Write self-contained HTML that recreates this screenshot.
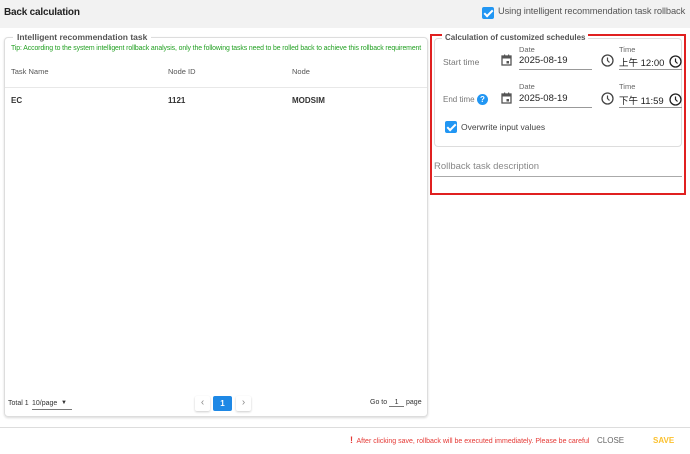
<!DOCTYPE html>
<html><head><meta charset="utf-8"><style>
*{box-sizing:border-box;margin:0;padding:0}
body{width:690px;height:454px;background:#fff;font-family:"Liberation Sans","Noto Sans CJK SC",sans-serif;position:relative;overflow:hidden;color:#333}
.a{position:absolute;white-space:nowrap}
.hdr{position:absolute;left:0;top:0;width:690px;height:28px;background:#f2f2f2}
.cb{position:absolute;width:12px;height:12px;background:#2196f3;border-radius:2px}
.cb:after{content:"";position:absolute;left:3.5px;top:1px;width:3px;height:7px;border:solid #fff;border-width:0 2px 2px 0;transform:rotate(45deg)}
.lbl{font-size:7.5px;color:#666}
.ul{position:absolute;border-bottom:1px solid #999}
svg{position:absolute}
</style></head><body>
<div class="hdr"></div>
<div class="a" style="left:4px;top:7px;font-size:10px;font-weight:bold;color:#222;letter-spacing:-0.2px">Back calculation</div>
<div class="cb" style="left:482px;top:7px"></div>
<div class="a" style="left:498px;top:6px;font-size:9.3px;color:#555;letter-spacing:-0.1px">Using intelligent recommendation task rollback</div>

<div class="a" style="left:4px;top:37px;width:424px;height:380px;border:1px solid #ddd;border-radius:4px;box-shadow:0 1px 2px rgba(0,0,0,.15)"></div>
<div class="a" style="left:13px;top:32px;background:#fff;padding:0 4px;font-size:8.5px;font-weight:bold;color:#555">Intelligent recommendation task</div>
<div class="a" style="left:11px;top:45px;font-size:6.9px;color:#22a022;letter-spacing:-0.1px">Tip: According to the system intelligent rollback analysis, only the following tasks need to be rolled back to achieve this rollback requirement</div>
<div class="a" style="left:11px;top:67px;font-size:7.5px;color:#555">Task Name</div>
<div class="a" style="left:168px;top:67px;font-size:7.5px;color:#555">Node ID</div>
<div class="a" style="left:292px;top:67px;font-size:7.5px;color:#555">Node</div>
<div class="a" style="left:5px;top:87px;width:422px;border-top:1px solid #e8e8e8"></div>
<div class="a" style="left:11px;top:96px;font-size:8px;font-weight:bold;color:#333">EC</div>
<div class="a" style="left:168px;top:96px;font-size:8px;font-weight:bold;color:#333">1121</div>
<div class="a" style="left:292px;top:96px;font-size:8px;font-weight:bold;color:#333">MODSIM</div>

<div class="a" style="left:8px;top:400px;font-size:7px">Total 1</div>
<div class="a" style="left:32px;top:400px;font-size:7px;width:40px;border-bottom:1px solid #777;height:10px">10/page <span style="position:absolute;left:29px;top:0;font-size:6px">▼</span></div>
<div class="a" style="left:195px;top:396px;width:15px;height:15px;border-radius:2px;box-shadow:0 1px 2px rgba(0,0,0,.2);font-size:10px;color:#888;text-align:center;line-height:14px">‹</div>
<div class="a" style="left:213px;top:396px;width:19px;height:15px;border-radius:2px;background:#1e88e5;color:#fff;font-size:8px;font-weight:bold;text-align:center;line-height:15px">1</div>
<div class="a" style="left:236px;top:396px;width:15px;height:15px;border-radius:2px;box-shadow:0 1px 2px rgba(0,0,0,.2);font-size:10px;color:#888;text-align:center;line-height:14px">›</div>
<div class="a" style="left:370px;top:399px;font-size:7px">Go to <span style="display:inline-block;width:15px;border-bottom:1px solid #777;text-align:center">1</span> page</div>

<div class="a" style="left:0;top:427px;width:690px;border-top:1px solid #ddd"></div>
<div class="a" style="left:350px;top:435px;font-size:7px;color:#e53935"><b style="font-size:9px">!</b>&nbsp; After clicking save, rollback will be executed immediately. Please be careful</div>
<div class="a" style="left:597px;top:436px;font-size:8px;color:#666">CLOSE</div>
<div class="a" style="left:653px;top:436px;font-size:8px;color:#fbc02d;font-weight:bold">SAVE</div>

<div class="a" style="left:430px;top:34px;width:256px;height:161px;border:2px solid #e02020"></div>
<div class="a" style="left:434px;top:38px;width:248px;height:109px;border:1px solid #ddd;border-radius:4px"></div>
<div class="a" style="left:442px;top:33px;background:#fff;padding:0 3px;font-size:8px;font-weight:bold;color:#555">Calculation of customized schedules</div>

<div class="a" style="left:443px;top:57px;font-size:8.5px;color:#777">Start time</div>
<svg style="left:501px;top:54px" width="11" height="12" viewBox="0 0 11 12"><rect x="1" y="2" width="9" height="9" fill="none" stroke="#555" stroke-width="1.3"/><rect x="1" y="2" width="9" height="2.5" fill="#555"/><rect x="3" y="0.5" width="1.2" height="2" fill="#555"/><rect x="7" y="0.5" width="1.2" height="2" fill="#555"/><rect x="5.5" y="7" width="2.5" height="2.5" fill="#555"/></svg>
<div class="a lbl" style="left:519px;top:45px">Date</div>
<div class="a" style="left:519px;top:55px;font-size:9.5px;color:#222">2025-08-19</div>
<div class="ul" style="left:519px;top:69px;width:73px"></div>
<svg style="left:601px;top:54px" width="13" height="13" viewBox="0 0 13 13"><circle cx="6.5" cy="6.5" r="5.5" fill="none" stroke="#444" stroke-width="1.3"/><path d="M6.5 3.5V6.5L8.5 8.5" fill="none" stroke="#444" stroke-width="1.2"/></svg>
<div class="a lbl" style="left:619px;top:45px">Time</div>
<div class="a" style="left:619px;top:55px;font-size:9.5px;color:#222">上午 12:00</div>
<svg style="left:669px;top:55px" width="13" height="13" viewBox="0 0 13 13"><circle cx="6.5" cy="6.5" r="5.5" fill="none" stroke="#222" stroke-width="1.3"/><path d="M6.5 3.5V6.5L8.5 8.5" fill="none" stroke="#222" stroke-width="1.2"/></svg>
<div class="ul" style="left:619px;top:69px;width:63px"></div>

<div class="a" style="left:443px;top:95px;font-size:8px;color:#777">End time</div>
<div class="a" style="left:477px;top:94px;width:11px;height:11px;border-radius:50%;background:#2196f3;color:#fff;font-size:8px;font-weight:bold;text-align:center;line-height:11px">?</div>
<svg style="left:501px;top:92px" width="11" height="12" viewBox="0 0 11 12"><rect x="1" y="2" width="9" height="9" fill="none" stroke="#555" stroke-width="1.3"/><rect x="1" y="2" width="9" height="2.5" fill="#555"/><rect x="3" y="0.5" width="1.2" height="2" fill="#555"/><rect x="7" y="0.5" width="1.2" height="2" fill="#555"/><rect x="5.5" y="7" width="2.5" height="2.5" fill="#555"/></svg>
<div class="a lbl" style="left:519px;top:82px">Date</div>
<div class="a" style="left:519px;top:93px;font-size:9.5px;color:#222">2025-08-19</div>
<div class="ul" style="left:519px;top:107px;width:73px"></div>
<svg style="left:601px;top:92px" width="13" height="13" viewBox="0 0 13 13"><circle cx="6.5" cy="6.5" r="5.5" fill="none" stroke="#444" stroke-width="1.3"/><path d="M6.5 3.5V6.5L8.5 8.5" fill="none" stroke="#444" stroke-width="1.2"/></svg>
<div class="a lbl" style="left:619px;top:82px">Time</div>
<div class="a" style="left:619px;top:93px;font-size:9.5px;color:#222">下午 11:59</div>
<svg style="left:669px;top:93px" width="13" height="13" viewBox="0 0 13 13"><circle cx="6.5" cy="6.5" r="5.5" fill="none" stroke="#222" stroke-width="1.3"/><path d="M6.5 3.5V6.5L8.5 8.5" fill="none" stroke="#222" stroke-width="1.2"/></svg>
<div class="ul" style="left:619px;top:107px;width:63px"></div>

<div class="cb" style="left:445px;top:121px"></div>
<div class="a" style="left:461px;top:122px;font-size:8.5px;color:#444">Overwrite input values</div>

<div class="a" style="left:434px;top:161px;font-size:9.5px;color:#888">Rollback task description</div>
<div class="a" style="left:434px;top:176px;width:248px;border-top:1px solid #aaa"></div>
</body></html>
